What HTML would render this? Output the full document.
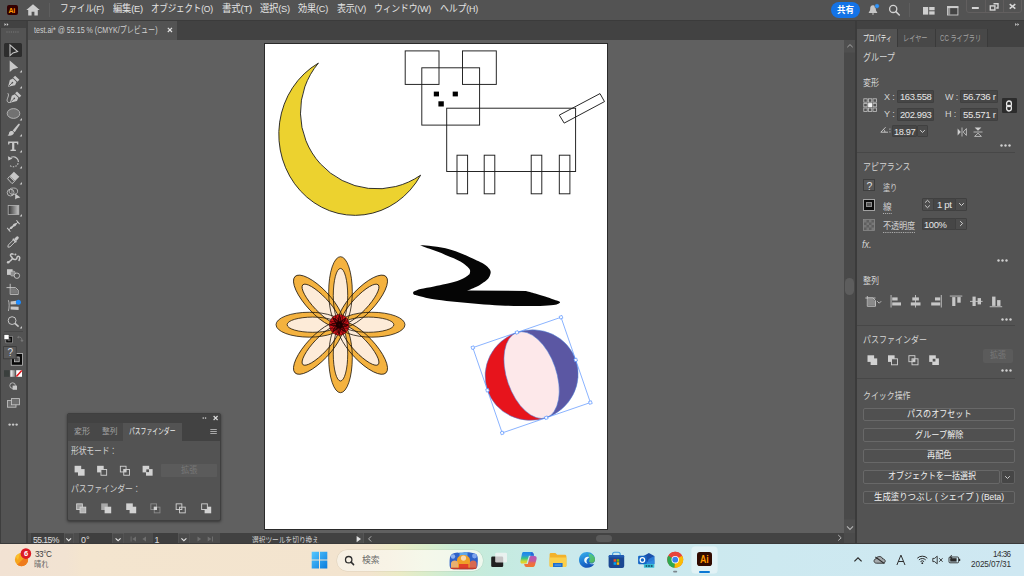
<!DOCTYPE html>
<html lang="ja">
<head>
<meta charset="utf-8">
<title>test.ai* @ 55.15 % (CMYK/プレビュー)</title>
<style>
*{box-sizing:border-box;margin:0;padding:0}
html,body{width:1024px;height:576px;overflow:hidden}
body{position:relative;background:#606060;font-family:"Liberation Sans","Noto Sans CJK JP",sans-serif;font-size:10px;color:#d6d6d6;line-height:1}
.abs{position:absolute}
.t{position:absolute;white-space:nowrap;line-height:1}
svg{position:absolute;overflow:visible}
/* menu bar */
#menubar{left:0;top:0;width:1024px;height:20px;background:#535353}
#menuline{left:0;top:20px;width:1024px;height:1px;background:#3b3b3b}
.mi{top:4.2px;font-size:9.7px;color:#e4e4e4;letter-spacing:-0.2px}
/* tab bar */
#tabbar{left:27px;top:21px;width:830px;height:19px;background:#424242}
#doctab{left:28px;top:21px;width:149px;height:19px;background:#535353}
/* toolbar */
#toolbar{left:0;top:21px;width:26px;height:523px;background:#535353;border-left:1px solid #3e3e3e}
#toolhead{left:0;top:21px;width:26px;height:7px;background:#424242}
#tooldiv{left:26px;top:21px;width:2px;height:523px;background:#3f3f3f}
/* canvas */
#canvas{left:28px;top:40px;width:816px;height:493px;background:#606060}
#artboard{left:264px;top:43px;width:344px;height:487px;background:#fff;border:1px solid #2a2a2a}
#vscroll{left:844.3px;top:40px;width:10.4px;height:493px;background:linear-gradient(#4f4f4f 0,#4f4f4f 12px,#494949 13px,#494949 479px,#4f4f4f 480px)}
#statusbar{left:28px;top:532.6px;width:828px;height:11.4px;background:#4c4c4c}
/* right panel */
#rdiv{left:854.5px;top:21px;width:2.3px;height:523px;background:#3b3b3b}
#rpanel{left:857px;top:21px;width:167px;height:523px;background:#535353}
#rhead{left:857px;top:21px;width:167px;height:8px;background:#424242}
#rtabs{left:857px;top:29px;width:167px;height:18px;background:#424242}
/* taskbar */
#taskbar{left:0;top:544px;width:1024px;height:32px;background:linear-gradient(90deg,#f2e2d3 0%,#f2e3d2 6.5%,#f4e5cf 8%,#f3e4cf 36%,#ecebc6 38.8%,#dbedcb 41.5%,#c9ecd7 44.5%,#c5ebe0 49%,#cae9ec 56%,#cde9f0 75%,#cfe8f2 100%)}
#taskline{left:0;top:543px;width:1024px;height:1px;background:#3a3a3a}

/* right panel widgets */
.inp{position:absolute;background:#464646;border:1px solid #404040;border-radius:1px}
.lbl{font-size:9px;color:#d2d2d2;letter-spacing:-0.2px}
.sec{font-size:9.5px;color:#d6d6d6}
.val{font-size:9.5px;color:#e6e6e6;letter-spacing:-0.38px}
.hr{position:absolute;left:857px;width:158px;height:1px;background:#474747}
.btn{position:absolute;left:863px;width:151.5px;height:13.5px;background:#505050;border:1px solid #686868;border-radius:2px}
.btx{font-size:9px;color:#f0f0f0}
.more{position:absolute;width:10px;height:3px}
</style>
</head>
<body>
<!-- ===== application chrome ===== -->
<div id="canvas" class="abs"></div>
<div id="artboard" class="abs"></div>
<div id="menubar" class="abs"></div>
<div id="menuline" class="abs"></div>
<div id="tabbar" class="abs"></div>
<div id="doctab" class="abs"></div>
<div id="toolbar" class="abs"></div>
<div id="toolhead" class="abs"></div>
<div id="tooldiv" class="abs"></div>
<div id="vscroll" class="abs"></div>
<div id="statusbar" class="abs"></div>
<div class="abs" style="left:363px;top:532.6px;width:481.300px;height:11.400px;background:#434343"></div>
<div id="rdiv" class="abs"></div>
<div id="rpanel" class="abs"></div>
<div id="rhead" class="abs"></div>
<div id="rtabs" class="abs"></div>
<!-- menu bar -->
<div class="abs" style="left:7px;top:5px;width:11px;height:10px;background:#330000;border-radius:2px"></div><div class="t" style="left:8.6px;top:6.6px;font-size:7px;font-weight:bold;color:#ff9a00;letter-spacing:-0.3px">Ai</div>
<svg width="14" height="12" viewBox="0 0 14 12" style="left:26.100px;top:4.400px"><path d="M7,0.300L0.300,6.100H2.200V11.500H5.600V7.800H8.400V11.500H11.800V6.100H13.700Z" fill="#cdcdcd"/></svg>
<div class="abs" style="left:48.500px;top:3px;width:1px;height:14px;background:#5e5e5e"></div>
<div class="t mi jp" style="left:60px;--w:44px">ファイル(F)</div>
<div class="t mi jp" style="left:113px;--w:30px">編集(E)</div>
<div class="t mi jp" style="left:151px;--w:62px">オブジェクト(O)</div>
<div class="t mi jp" style="left:222px;--w:30px">書式(T)</div>
<div class="t mi jp" style="left:260px;--w:30px">選択(S)</div>
<div class="t mi jp" style="left:298px;--w:30px">効果(C)</div>
<div class="t mi jp" style="left:337px;--w:29px">表示(V)</div>
<div class="t mi jp" style="left:374px;--w:57px">ウィンドウ(W)</div>
<div class="t mi jp" style="left:440px;--w:38px">ヘルプ(H)</div>
<div class="abs" style="left:830.8px;top:2.4px;width:29.4px;height:16px;border-radius:8px;background:#1473e6"></div><div class="t jp" style="left:837px;top:6px;font-size:9px;font-weight:bold;color:#fff;--w:17px">共有</div>
<svg width="12" height="12" viewBox="0 0 12 12" style="left:867.1px;top:4.4px"><path d="M6,1.300C4,1.300 3.200,2.900 3.200,4.600C3.200,6.500 2.700,7.500 1.800,8.300V8.900H10.200V8.300C9.300,7.500 8.800,6.500 8.800,4.600C8.800,2.900 8,1.300 6,1.300ZM4.900,9.600A1.100,1.100 0 0,0 7.100,9.600Z" fill="#c6c6c6"/><circle cx="10" cy="2.100" r="2.300" fill="#2e96ff" stroke="#535353" stroke-width=".5"/></svg>
<svg width="14" height="14" viewBox="0 0 14 14" style="left:887px;top:3px"><circle cx="6.2" cy="5.9" r="3.6" fill="none" stroke="#d2d2d2" stroke-width="1.3"/><path d="M8.9,8.6L12.3,12" stroke="#d2d2d2" stroke-width="1.5" stroke-linecap="round"/></svg>
<div class="abs" style="left:909px;top:3px;width:1px;height:14px;background:#5e5e5e"></div>
<svg width="12" height="8" viewBox="0 0 12 8" style="left:923.300px;top:7.200px"><rect x="0" y="0" width="5.2" height="7.6" fill="#cfcfcf"/><rect x="6.2" y="0" width="5.4" height="3.3" fill="#cfcfcf"/><rect x="6.2" y="4.3" width="5.4" height="3.3" fill="#cfcfcf"/></svg>
<svg width="12" height="10" viewBox="0 0 12 10" style="left:947px;top:6px"><rect x="0.5" y="0.6" width="10.400" height="8.400" fill="#444" stroke="#cdcdcd" stroke-width="0.9"/><rect x="0.9" y="1.800" width="2.300" height="6.800" fill="#cdcdcd" opacity=".6"/><rect x="0.100" y="0.200" width="11.200" height="1.900" fill="#cdcdcd"/></svg>
<div class="abs" style="left:966px;top:-1px;width:55.500px;height:13.700px;border:1px solid #625f5f;border-radius:0 0 3px 3px"></div><div class="abs" style="left:984.500px;top:0;width:1px;height:12px;background:#605d5d"></div><div class="abs" style="left:1002.600px;top:0;width:1px;height:12px;background:#605d5d"></div>
<svg width="60" height="13" viewBox="966 0 60 13" style="left:966px;top:0"><path d="M971.900,8H978.800" stroke="#d4d4d4" stroke-width="2"/><path d="M993.500,3.700H998V8H996.200" fill="none" stroke="#d4d4d4" stroke-width="1.400"/><rect x="990.300" y="5.900" width="4.600" height="4.100" fill="none" stroke="#d4d4d4" stroke-width="1.400"/><path d="M1009.700,4.100L1015.300,8.700M1015.300,4.100L1009.700,8.700" stroke="#d8d8d8" stroke-width="1.500"/></svg>

<!-- document tab -->
<div class="t jp" style="left:34px;top:26.300px;font-size:8.600px;color:#d0d0d0;--w:123.500px">test.ai* @ 55.15 % (CMYK/プレビュー)</div>
<svg width="8" height="8" viewBox="0 0 8 8" style="left:166.3px;top:26.3px"><path d="M1.8,1.8L6,6M6,1.8L1.8,6" stroke="#e2e2e2" stroke-width="1.2"/></svg>

<!-- toolbar -->
<div class="abs" style="left:4px;top:43px;width:18px;height:13.5px;background:#2d2d2d;border-radius:1.5px"></div>
<svg width="28" height="410" viewBox="0 20 28 410" style="left:0;top:20px"><path d="M4.500,23L6.200,24.500L4.500,26ZM6.800,23L8.500,24.500L6.800,26Z" fill="#cfcfcf"/><rect x="6.4" y="31.2" width="1.2" height="1.6" fill="#6a6a6a"/><rect x="8.600000000000001" y="31.2" width="1.2" height="1.6" fill="#6a6a6a"/><rect x="10.8" y="31.2" width="1.2" height="1.6" fill="#6a6a6a"/><rect x="13.0" y="31.2" width="1.2" height="1.6" fill="#6a6a6a"/><rect x="15.200000000000001" y="31.2" width="1.2" height="1.6" fill="#6a6a6a"/><rect x="17.4" y="31.2" width="1.2" height="1.6" fill="#6a6a6a"/><path d="M10,44.9V55.6L13,52.9L17.6,51.5Z" fill="none" stroke="#c8c8c8" stroke-width="1.05" stroke-linejoin="miter"/><path d="M9.7,60.6V71.9L13,69.2L18.2,67.8Z" fill="#c8c8c8"/><path d="M22,70.1V72.5H19.6Z" fill="#c8c8c8"/><g transform="translate(13.5 81.5) rotate(45)"><path d="M0,7.600L-3.700,1.500L-2.500,-1.700H2.500L3.700,1.500Z" fill="#c8c8c8"/><rect x="-3" y="-5.300" width="6" height="2.700" fill="#c8c8c8"/><path d="M0,6.400V2" stroke="#535353" stroke-width="0.800"/><circle cx="0" cy="1.500" r="0.800" fill="#535353"/></g><path d="M22,86.1V88.5H19.6Z" fill="#c8c8c8"/><g transform="translate(15.4 97.3) rotate(45)"><path d="M0,7.600L-3.700,1.500L-2.500,-1.700H2.500L3.700,1.500Z" fill="#c8c8c8"/><rect x="-3" y="-5.300" width="6" height="2.700" fill="#c8c8c8"/><path d="M0,6.400V2" stroke="#535353" stroke-width="0.800"/><circle cx="0" cy="1.500" r="0.800" fill="#535353"/></g><path d="M7.8,93.2C10,95.5 6,99 7.4,101.6C8.3,103 10,102.6 11.2,101.8" fill="none" stroke="#c8c8c8" stroke-width="0.9"/><ellipse cx="13.5" cy="113.5" rx="6.3" ry="4.9" fill="#727272" stroke="#b8b8b8" stroke-width="0.9"/><path d="M22,118.1V120.5H19.6Z" fill="#c8c8c8"/><path d="M18.500,123.800C19.500,123.300 20.200,124.100 19.600,125.100L14.700,132.300L12.700,130.600Z" fill="#c8c8c8"/><path d="M12.100,131.100C10,130.400 8.800,132.300 9,133.600C9,134.500 8.400,135 7.500,135.200C9.700,136.300 12.900,135.800 13.900,133.300C14.200,132.400 13.200,131.400 12.100,131.100Z" fill="#c8c8c8"/><path d="M22,134.100V136.500H19.600Z" fill="#c8c8c8"/><path d="M8.100,141.600H18.300V144.600H17.200L16.800,143.100H14.300V149.400L15.900,149.700V150.900H10.500V149.700L12.100,149.400V143.100H9.600L9.200,144.600H8.100Z" fill="#c8c8c8"/><path d="M22,150.1V152.5H19.6Z" fill="#c8c8c8"/><path d="M11.200,157.300A5,5 0 1,1 8.700,163.600" fill="none" stroke="#c8c8c8" stroke-width="1.100" stroke-dasharray="10 1.300 1.400 1.300 1.400 1.300 1.400 1.300 1.400 20"/><path d="M7.900,156.200L8.400,160.600L12.500,158.400Z" fill="#c8c8c8"/><path d="M22,166.1V168.5H19.6Z" fill="#c8c8c8"/><path d="M13.9,171.7L19.3,176.7L15.1,181L9.7,176Z" fill="#c8c8c8"/><path d="M9.3,176.5L14.6,181.4L12,183.6L7.6,178.8Z" fill="#535353" stroke="#c8c8c8" stroke-width="0.9"/><path d="M22,182.1V184.5H19.6Z" fill="#c8c8c8"/><circle cx="10.6" cy="192.6" r="3.4" fill="none" stroke="#c8c8c8" stroke-width="0.8"/><ellipse cx="13.4" cy="191.2" rx="4.2" ry="3.2" fill="none" stroke="#c8c8c8" stroke-width="0.8"/><path d="M12,189V196" stroke="#c8c8c8" stroke-width="0.6"/><path d="M15.2,193.6V199.6L16.9,198.2L20.4,197.4Z" fill="#c8c8c8"/><defs><linearGradient id="tg" x1="0" x2="1" y1="0" y2="0"><stop offset="0" stop-color="#333"/><stop offset="1" stop-color="#c4c4c4"/></linearGradient></defs><rect x="8.2" y="205.4" width="10.6" height="9" fill="url(#tg)" stroke="#b4b4b4" stroke-width="0.8"/><path d="M22,214.1V216.5H19.6Z" fill="#c8c8c8"/><g transform="translate(13.400 226) rotate(-39.500)"><path d="M-6,-2.500V2.500M6,-2.500V2.500" stroke="#c8c8c8" stroke-width="1"/><path d="M-6,0H6" stroke="#c8c8c8" stroke-width="0.900"/><path d="M-4.600,0C-3.600,-1.500 -2.400,-1.300 -1.400,-0.800C-0.400,-0.300 0.600,-1.500 1.800,-1.300C3,-1.100 3.800,-0.600 4.600,0C3.800,0.600 3,1.100 1.800,1.300C0.600,1.500 -0.400,0.300 -1.400,0.800C-2.400,1.300 -3.600,1.500 -4.600,0Z" fill="#c8c8c8"/></g><g transform="translate(13.3 241.8) rotate(45)"><path d="M-1.3,-1.400H1.300V6L0,7.600L-1.300,6Z" fill="none" stroke="#c8c8c8" stroke-width="0.9"/><rect x="-2.500" y="-2.600" width="5" height="1.600" fill="#c8c8c8"/><path d="M-1.500,-2.600V-5.400A1.500,1.800 0 0,1 1.500,-5.400V-2.600Z" fill="#c8c8c8"/></g><path d="M8,262.4C10,261.600 11.600,260 12.200,258.400C12.600,256.800 10.600,256.600 10.400,255.200C10.400,254 12,253.400 13,254.200M12.400,258.200C14.600,260.400 17,259.600 17,257.600C17,256 19,255.600 19.600,257.200C20,258.400 19.400,259.400 19,260.400" fill="none" stroke="#c8c8c8" stroke-width="1.500" stroke-linecap="round"/><circle cx="8.2" cy="262.2" r="1.3" fill="#c8c8c8"/><circle cx="15.4" cy="254.6" r="1" fill="#c8c8c8"/><rect x="7" y="269.2" width="5.6" height="5.7" fill="#c8c8c8"/><rect x="10.6" y="271.2" width="4.6" height="4.8" rx="1.4" fill="#8c8c8c" stroke="#c8c8c8" stroke-width="0.6"/><circle cx="16.9" cy="275.7" r="2.7" fill="#535353" stroke="#c8c8c8" stroke-width="0.9"/><path d="M10.2,283.8V294.4M6.500,287.600H15.400L18.200,290.200V294.400H10.200" fill="none" stroke="#c8c8c8" stroke-width="0.9"/><path d="M10.8,288.2H15.100L17.600,290.500V293.800H10.800Z" fill="#7a7a7a"/><path d="M8.4,300.2C9.400,303.400 9.400,307 8.400,311" fill="none" stroke="#c8c8c8" stroke-width="0.8"/><path d="M10.6,301.6L16.4,300.8V304.2L10.6,304.6Z M10.6,306.4L18.6,306.8V310L10.6,309.4Z" fill="#c8c8c8"/><circle cx="18.4" cy="302.2" r="2.5" fill="#1e8cff"/><circle cx="12.1" cy="320.6" r="3.9" fill="none" stroke="#c8c8c8" stroke-width="1"/><path d="M15,323.4L18.6,326.6" stroke="#c8c8c8" stroke-width="1.6"/><path d="M22,326.1V328.5H19.6Z" fill="#c8c8c8"/><path d="M4.3,331.5H23" stroke="#474747" stroke-width="1"/><rect x="6.8" y="337.4" width="4.6" height="4.6" fill="none" stroke="#0a0a0a" stroke-width="1.6"/><rect x="5.9" y="336.5" width="6.4" height="6.4" fill="none" stroke="#b0b0b0" stroke-width="0.5"/><rect x="4" y="334.6" width="5" height="5" fill="#fff" stroke="#333" stroke-width="0.6"/><path d="M18.4,337.2C20.400,336.600 22,337.800 22,340.400" fill="none" stroke="#787878" stroke-width="1"/><path d="M18.6,335.6L17,337.4L19,338.6ZM20.400,340L22,342.200L23.600,340Z" fill="#787878"/><rect x="11.2" y="353.6" width="11.4" height="11.6" fill="#0a0a0a" stroke="#d4d4d4" stroke-width="0.7"/><rect x="14.6" y="357" width="4.6" height="4.8" fill="#535353" stroke="#d4d4d4" stroke-width="0.7"/><rect x="3.6" y="346.6" width="12.6" height="12.2" fill="#5a5a5a" stroke="#3a3a3a" stroke-width="0.8"/><rect x="4" y="370.2" width="5.6" height="6.6" fill="#3a3f3d"/><defs><linearGradient id="tg2" x1="0" x2="1"><stop offset="0" stop-color="#fff"/><stop offset="1" stop-color="#777"/></linearGradient></defs><rect x="10.4" y="370.2" width="4.8" height="6.6" fill="url(#tg2)"/><rect x="16.2" y="370.2" width="5.8" height="6.6" fill="#fff"/><path d="M16.4,376.4L21.8,370.6" stroke="#e8131a" stroke-width="1.5"/><circle cx="12.6" cy="385.6" r="2.8" fill="none" stroke="#c8c8c8" stroke-width="0.8"/><rect x="12.6" y="385.6" width="4.4" height="4.2" fill="#c8c8c8"/><rect x="7.4" y="400.6" width="8.6" height="6.6" fill="#6e6e6e" stroke="#c8c8c8" stroke-width="0.8"/><rect x="11.4" y="398.6" width="8.2" height="6.2" fill="#6e6e6e" stroke="#c8c8c8" stroke-width="0.8"/><circle cx="9.6" cy="424.6" r="1.2" fill="#c8c8c8"/><circle cx="13.1" cy="424.6" r="1.2" fill="#c8c8c8"/><circle cx="16.6" cy="424.6" r="1.2" fill="#c8c8c8"/></svg>
<div class="t" style="left:7.4px;top:348px;font-size:10px;color:#d6dce6">?</div>

<svg id="art" width="1024" height="576" viewBox="0 0 1024 576" style="left:0;top:0">
<!-- moon -->
<path d="M318.4,63.1A76.1,81.1 0 1,0 420.6,175.2A76.52,76.52 0 0,1 318.4,63.1Z" fill="#ecd22f" stroke="#1c1c1c" stroke-width="0.9"/>
<!-- box animal -->
<g fill="none" stroke="#1c1c1c" stroke-width="0.95">
<rect x="405.2" y="50.9" width="33.8" height="33.5"/>
<rect x="462.5" y="50.9" width="33.8" height="33.5"/>
<rect x="421.8" y="67.8" width="57.8" height="57.3"/>
<rect x="446.7" y="108.2" width="128.9" height="63.3"/>
<rect x="457" y="155.2" width="10.6" height="38.6"/>
<rect x="484.2" y="155.2" width="10.6" height="38.6"/>
<rect x="531.2" y="155.2" width="10.6" height="38.6"/>
<rect x="559.3" y="155.2" width="10.6" height="38.6"/>
<path d="M559.3,115.1L600,93.6L604.5,101.6L564.2,123.1Z"/>
</g>
<g fill="#000"><rect x="433.8" y="91.6" width="5.2" height="4.8"/><rect x="452.7" y="91.6" width="5.2" height="4.8"/><rect x="438.4" y="101.3" width="5.4" height="5.2"/></g>
<!-- flower -->
<g transform="translate(340.5 324.7) scale(0.948 1)"><defs><path id="po" d="M-12.45,-33a12.45,35 0 1,0 24.9,0a12.45,35 0 1,0 -24.9,0z"/><path id="pin" d="M-7.6,-29.4a7.6,26.9 0 1,0 15.2,0a7.6,26.9 0 1,0 -15.2,0z"/><path id="prg" d="M-12.45,-33a12.45,35 0 1,0 24.9,0a12.45,35 0 1,0 -24.9,0zM-7.6,-29.4a7.6,26.9 0 1,0 15.2,0a7.6,26.9 0 1,0 -15.2,0z"/></defs><g transform="rotate(0)"><use href="#po" fill="#f4b23f"/><use href="#pin" fill="#fdebd8"/></g><g transform="rotate(45)"><use href="#po" fill="#f4b23f"/><use href="#pin" fill="#fdebd8"/></g><g transform="rotate(90)"><use href="#po" fill="#f4b23f"/><use href="#pin" fill="#fdebd8"/></g><g transform="rotate(135)"><use href="#po" fill="#f4b23f"/><use href="#pin" fill="#fdebd8"/></g><g transform="rotate(180)"><use href="#po" fill="#f4b23f"/><use href="#pin" fill="#fdebd8"/></g><g transform="rotate(225)"><use href="#po" fill="#f4b23f"/><use href="#pin" fill="#fdebd8"/></g><g transform="rotate(270)"><use href="#po" fill="#f4b23f"/><use href="#pin" fill="#fdebd8"/></g><g transform="rotate(315)"><use href="#po" fill="#f4b23f"/><use href="#pin" fill="#fdebd8"/></g><g fill="none" stroke="#1a1208" stroke-width="0.8"><use href="#prg" transform="rotate(0)"/><use href="#prg" transform="rotate(45)"/><use href="#prg" transform="rotate(90)"/><use href="#prg" transform="rotate(135)"/><use href="#prg" transform="rotate(180)"/><use href="#prg" transform="rotate(225)"/><use href="#prg" transform="rotate(270)"/><use href="#prg" transform="rotate(315)"/></g><g transform="translate(-1.3 0.2)"><circle cx="0" cy="0" r="10.4" fill="#d4141a" stroke="#300" stroke-width="0.6"/><g fill="none" stroke="#1a0000" stroke-width="0.800" opacity="0.6"><path d="M0,-10q-4,6 0,20" transform="rotate(22)"/><path d="M0,-10q-4,6 0,20" transform="rotate(67)"/><path d="M0,-10q-4,6 0,20" transform="rotate(112)"/><path d="M0,-10q-4,6 0,20" transform="rotate(157)"/><path d="M0,-10q-4,6 0,20" transform="rotate(202)"/><path d="M0,-10q-4,6 0,20" transform="rotate(247)"/><path d="M0,-10q-4,6 0,20" transform="rotate(292)"/><path d="M0,-10q-4,6 0,20" transform="rotate(337)"/></g><g fill="none" stroke="#1a0000" stroke-width="1.300" opacity="0.8"><path d="M0,-9.5q3.4,5 0,19" transform="rotate(0)"/><path d="M0,-9.5q3.4,5 0,19" transform="rotate(45)"/><path d="M0,-9.5q3.4,5 0,19" transform="rotate(90)"/><path d="M0,-9.5q3.4,5 0,19" transform="rotate(135)"/><path d="M0,-9.5q3.4,5 0,19" transform="rotate(180)"/><path d="M0,-9.5q3.4,5 0,19" transform="rotate(225)"/><path d="M0,-9.5q3.4,5 0,19" transform="rotate(270)"/><path d="M0,-9.5q3.4,5 0,19" transform="rotate(315)"/></g><circle cx="0" cy="0" r="3.600" fill="#1a0000" opacity=".85"/></g></g>
<!-- swoosh -->
<path d="M419.8,244.9C421.3,245.1 424.6,245.2 428.9,245.8C433.2,246.3 440.5,247.2 445.5,248.3C450.5,249.4 454.6,250.9 458.8,252.4C462.9,253.9 467.1,255.9 470.4,257.4C473.7,258.9 476.2,260.0 478.7,261.2C481.2,262.5 483.5,263.6 485.3,264.9C487.1,266.2 488.6,267.8 489.5,269.0C490.4,270.3 490.7,271.1 490.7,272.3C490.7,273.6 490.1,275.2 489.5,276.5C488.9,277.7 488.3,278.6 487.0,279.8C485.8,281.0 483.7,282.4 482.0,283.5C480.4,284.6 479.5,285.3 477.0,286.4C474.6,287.6 468.7,289.9 467.1,290.6L526.0,290.9C527.5,291.3 532.0,292.5 535.2,293.4C538.3,294.3 541.5,295.2 545.1,296.4C548.7,297.6 554.2,299.6 556.7,300.6C559.2,301.5 559.8,301.7 560.1,302.2C560.3,302.7 559.5,303.2 558.4,303.7C557.3,304.2 556.5,304.7 553.4,305.0C550.4,305.4 545.7,305.7 540.1,305.9C534.6,306.0 526.9,306.1 520.2,306.0C513.6,306.0 507.2,305.7 500.3,305.4C493.4,305.0 485.9,304.4 478.7,303.9C471.5,303.3 464.0,302.7 457.1,302.1C450.2,301.4 442.5,300.4 437.2,299.7C431.9,299.0 428.9,298.4 425.6,297.7C422.3,297.0 419.2,296.1 417.3,295.6C415.4,295.1 415.0,295.2 414.3,294.7C413.6,294.3 413.0,293.4 413.1,292.8C413.2,292.1 413.5,291.7 414.8,291.1C416.0,290.5 417.4,289.7 420.6,288.9C423.8,288.2 429.7,287.3 433.9,286.4C438.0,285.6 442.2,284.7 445.5,284.0C448.8,283.2 451.3,282.7 453.8,282.0C456.3,281.3 458.5,280.6 460.4,279.8C462.4,279.0 464.0,278.1 465.4,277.3C466.8,276.5 468.0,275.5 468.7,274.8C469.5,274.2 469.5,274.2 469.7,273.5C470.0,272.8 470.2,271.5 470.1,270.7C470.0,269.8 469.9,269.5 469.1,268.5C468.3,267.5 466.9,266.0 465.4,264.9C464.0,263.7 462.4,262.6 460.4,261.5C458.5,260.4 456.3,259.3 453.8,258.2C451.3,257.1 448.3,256.0 445.5,254.9C442.7,253.8 440.0,252.6 437.2,251.6C434.4,250.5 431.8,249.7 428.9,248.6C426.0,247.5 421.3,245.6 419.8,244.9Z" fill="#050505"/>
<!-- ball -->
<g transform="rotate(-19 531.6 375.1)">
<path d="M531.6,330.0A46.65,45.1 0 0,0 531.6,420.20000000000005Z" fill="#e7141c"/>
<path d="M531.6,330.0A46.65,45.1 0 0,1 531.6,420.20000000000005Z" fill="#5b57a3"/>
<ellipse cx="531.6" cy="375.1" rx="24.8" ry="45.1" fill="#fde8ea"/>
<ellipse cx="531.6" cy="375.1" rx="46.65" ry="45.1" fill="none" stroke="#4b7dd8" stroke-width="0.5"/>
<ellipse cx="531.6" cy="375.1" rx="24.8" ry="45.1" fill="none" stroke="#4b7dd8" stroke-width="0.5"/>
<rect x="484.95" y="330.00" width="93.3" height="90.2" fill="none" stroke="#4f8cff" stroke-width="0.6"/>
<g fill="#fff" stroke="#4f8cff" stroke-width="0.6">
<rect x="483.50" y="328.55" width="2.9" height="2.9"/><rect x="530.15" y="328.55" width="2.9" height="2.9"/><rect x="576.80" y="328.55" width="2.9" height="2.9"/><rect x="483.50" y="373.65" width="2.9" height="2.9"/><rect x="576.80" y="373.65" width="2.9" height="2.9"/><rect x="483.50" y="418.75" width="2.9" height="2.9"/><rect x="530.15" y="418.75" width="2.9" height="2.9"/><rect x="576.80" y="418.75" width="2.9" height="2.9"/>
</g>
</g>
</svg>
<!-- properties panel -->
<svg width="6" height="4" viewBox="0 0 6 4" style="left:1015px;top:22.800px"><path d="M0.200,0.100L1.900,1.600L0.200,3.100ZM2.400,0.100L4.100,1.600L2.400,3.100Z" fill="#cfcfcf"/></svg>
<div class="abs" style="left:857px;top:29px;width:40px;height:18px;background:#535353"></div><div class="abs" style="left:898px;top:29px;width:36.5px;height:17.5px;background:#484848"></div><div class="abs" style="left:935.5px;top:29px;width:51px;height:17.5px;background:#484848"></div><div class="abs" style="left:897px;top:29px;width:1px;height:18px;background:#3a3a3a"></div><div class="abs" style="left:934.5px;top:29px;width:1px;height:18px;background:#3a3a3a"></div><div class="abs" style="left:986.5px;top:29px;width:1px;height:18px;background:#3a3a3a"></div>
<div class="t jp" style="left:862.5px;top:33.5px;font-size:8.5px;color:#ececec;--w:29px">プロパティ</div><div class="t jp" style="left:903px;top:33.5px;font-size:8.5px;color:#a2a2a2;--w:24.5px">レイヤー</div><div class="t jp" style="left:940px;top:33.5px;font-size:8.5px;color:#a2a2a2;--w:41px">CC ライブラリ</div>
<div class="t sec jp" style="left:863px;top:53px;font-size:10px;--w:32px">グループ</div>
<div class="t sec jp" style="left:863px;top:77.5px;--w:16px">変形</div>
<svg width="14" height="14" viewBox="0 0 14 14" style="left:862.5px;top:98px"><rect x="0.8" y="0.8" width="3.4" height="3.4" fill="none" stroke="#c4c4c4" stroke-width="0.8"/><rect x="0.8" y="5.3999999999999995" width="3.4" height="3.4" fill="none" stroke="#c4c4c4" stroke-width="0.8"/><rect x="0.8" y="10.0" width="3.4" height="3.4" fill="none" stroke="#c4c4c4" stroke-width="0.8"/><rect x="5.3999999999999995" y="0.8" width="3.4" height="3.4" fill="none" stroke="#c4c4c4" stroke-width="0.8"/><rect x="5.1" y="5.1" width="4" height="4" fill="#f2f2f2"/><rect x="5.3999999999999995" y="10.0" width="3.4" height="3.4" fill="none" stroke="#c4c4c4" stroke-width="0.8"/><rect x="10.0" y="0.8" width="3.4" height="3.4" fill="none" stroke="#c4c4c4" stroke-width="0.8"/><rect x="10.0" y="5.3999999999999995" width="3.4" height="3.4" fill="none" stroke="#c4c4c4" stroke-width="0.8"/><rect x="10.0" y="10.0" width="3.4" height="3.4" fill="none" stroke="#c4c4c4" stroke-width="0.8"/></svg>
<div class="t lbl" style="left:883.5px;top:92px;font-size:9.5px;--w:10.5px">X :</div><div class="t lbl" style="left:883.5px;top:109.200px;font-size:9.5px;--w:10.5px">Y :</div><div class="t lbl" style="left:944.5px;top:92px;font-size:9.5px;--w:13px">W :</div><div class="t lbl" style="left:944.5px;top:109.200px;font-size:9.5px;--w:11px">H :</div>
<div class="inp" style="left:897.200px;top:90.300px;width:36.700px;height:12.800px"></div><div class="inp" style="left:897.200px;top:107.800px;width:36.700px;height:12.800px"></div><div class="inp" style="left:960.400px;top:90.300px;width:37.400px;height:12.800px"></div><div class="inp" style="left:960.400px;top:107.800px;width:37.400px;height:12.800px"></div>
<div class="t val" style="left:900.400px;top:92.100px;--w:31.500px">163.558</div><div class="t val" style="left:900.400px;top:109.600px;--w:31.500px">202.993</div><div class="t val" style="left:963.400px;top:92.100px;--w:32.500px">56.736 r</div><div class="t val" style="left:963.400px;top:109.600px;--w:32.500px">55.571 r</div>
<div class="abs" style="left:1001.5px;top:98px;width:15.5px;height:15px;background:#2c2c2c;border-radius:1px"></div><svg width="8" height="12" viewBox="0 0 8 12" style="left:1005.3px;top:99.5px"><rect x="1.6" y="1" width="4.8" height="5.6" rx="2.4" fill="none" stroke="#e8e8e8" stroke-width="1.3"/><rect x="1.6" y="5.4" width="4.8" height="5.6" rx="2.4" fill="none" stroke="#e8e8e8" stroke-width="1.3"/></svg>
<svg width="12" height="8" viewBox="0 0 12 8" style="left:879.5px;top:125.5px"><path d="M0.8,6.2H8M0.8,6.2L5.6,1.2M5,6.2A4,4 0 0,0 3.6,3.4" fill="none" stroke="#cfcfcf" stroke-width="0.9"/><rect x="9.4" y="2.6" width="1" height="1" fill="#cfcfcf"/><rect x="9.4" y="5.4" width="1" height="1" fill="#cfcfcf"/></svg><div class="inp" style="left:891.800px;top:124.800px;width:25.200px;height:12.500px"></div><div class="inp" style="left:917px;top:124.800px;width:11.200px;height:12.500px;background:#4b4b4b"></div><div class="t val" style="left:893.900px;top:126.700px;font-size:9.700px;--w:21.300px">18.97</div><svg width="7" height="5" viewBox="0 0 7 5" style="left:919.200px;top:128.700px"><path d="M1.200,1.200L3.500,3.400L5.800,1.200" fill="none" stroke="#d4d4d4" stroke-width="1"/></svg>
<svg width="10" height="10" viewBox="0 0 10 10" style="left:957px;top:127px"><path d="M0.6,1.6L3.8,5L0.6,8.4Z" fill="#cfcfcf"/><path d="M9.4,1.6L6.2,5L9.4,8.4Z" fill="none" stroke="#cfcfcf" stroke-width="0.8"/><path d="M5,0.5V9.5" stroke="#cfcfcf" stroke-width="0.8"/></svg><svg width="10" height="10" viewBox="0 0 10 10" style="left:973px;top:127px"><path d="M1.6,0.6L5,3.8L8.4,0.6Z" fill="#cfcfcf"/><path d="M1.6,9.4L5,6.2L8.4,9.4Z" fill="none" stroke="#cfcfcf" stroke-width="0.8"/><path d="M0.5,5H9.5" stroke="#cfcfcf" stroke-width="0.8"/></svg>
<svg width="11" height="3" viewBox="0 0 11 3" style="left:1000.0px;top:144.3px"><circle cx="1.5" cy="1.5" r="1.2" fill="#d0d0d0"/><circle cx="5.5" cy="1.5" r="1.2" fill="#d0d0d0"/><circle cx="9.5" cy="1.5" r="1.2" fill="#d0d0d0"/></svg><div class="hr" style="top:152px"></div>
<div class="t sec jp" style="left:863px;top:161.5px;--w:47.5px">アピアランス</div>
<div class="abs" style="left:863.200px;top:179.300px;width:12px;height:12.200px;background:#575757;border:1px solid #3e3e3e"></div><div class="t" style="left:866.400px;top:180.700px;font-size:10.500px;color:#dcdcdc">?</div><div class="t lbl jp" style="left:883px;top:183.5px;--w:14px">塗り</div>
<div class="abs" style="left:863px;top:199px;width:12px;height:11.5px;background:#0c0c0c;border:1px solid #a2a2a2"></div><div class="abs" style="left:866.400px;top:202.300px;width:5.400px;height:5px;background:#535353;border:1px solid #8e8e8e"></div><div class="t lbl jp" style="left:883px;top:203px;border-bottom:1px dotted #bbb;padding-bottom:0.5px;--w:8.5px">線</div>
<div class="inp" style="left:922px;top:198px;width:11.5px;height:12.5px;background:#4d4d4d"></div><div class="inp" style="left:933px;top:198px;width:22.5px;height:12.5px"></div><div class="inp" style="left:955px;top:198px;width:12px;height:12.5px;background:#4d4d4d"></div><svg width="7" height="10" viewBox="0 0 7 10" style="left:924.2px;top:199.2px"><path d="M1.100,3.600L3.500,1.300L5.900,3.600M1.100,6.400L3.500,8.700L5.900,6.400" fill="none" stroke="#d4d4d4" stroke-width="0.950"/></svg><div class="t val" style="left:936.5px;top:200px;--w:14.5px">1 pt</div><svg width="7" height="5" viewBox="0 0 7 5" style="left:957.5px;top:201.7px"><path d="M1.200,1.200L3.500,3.500L5.800,1.200" fill="none" stroke="#d4d4d4" stroke-width="1"/></svg>
<svg width="12" height="12" viewBox="0 0 12 12" style="left:863px;top:218.5px"><rect x="0.5" y="0.5" width="11" height="11" fill="#5f5f5f" stroke="#8a8a8a" stroke-width="0.8"/><rect x="1.0" y="1.0" width="2.5" height="2.5" fill="#777"/><rect x="1.0" y="6.0" width="2.5" height="2.5" fill="#777"/><rect x="3.5" y="3.5" width="2.5" height="2.5" fill="#777"/><rect x="3.5" y="8.5" width="2.5" height="2.5" fill="#777"/><rect x="6.0" y="1.0" width="2.5" height="2.5" fill="#777"/><rect x="6.0" y="6.0" width="2.5" height="2.5" fill="#777"/><rect x="8.5" y="3.5" width="2.5" height="2.5" fill="#777"/><rect x="8.5" y="8.5" width="2.5" height="2.5" fill="#777"/></svg><div class="t lbl jp" style="left:883px;top:222px;border-bottom:1px dotted #bbb;padding-bottom:0.5px;--w:32px">不透明度</div>
<div class="inp" style="left:922px;top:217.5px;width:33.5px;height:12.5px"></div><div class="inp" style="left:955px;top:217.5px;width:12px;height:12.5px;background:#4d4d4d"></div><div class="t val" style="left:924px;top:219.5px;--w:22.5px">100%</div><svg width="5" height="7" viewBox="0 0 5 7" style="left:959px;top:220.3px"><path d="M1.200,1.100L3.600,3.500L1.200,5.900" fill="none" stroke="#d4d4d4" stroke-width="1"/></svg>
<div class="t" style="left:861.5px;top:240px;font-size:10px;font-style:italic;color:#d0d0d0;--w:9.5px">fx.</div>
<svg width="11" height="3" viewBox="0 0 11 3" style="left:996.5px;top:259.0px"><circle cx="1.5" cy="1.5" r="1.2" fill="#d0d0d0"/><circle cx="5.5" cy="1.5" r="1.2" fill="#d0d0d0"/><circle cx="9.5" cy="1.5" r="1.2" fill="#d0d0d0"/></svg>
<!-- align -->
<div class="t sec jp" style="left:863px;top:276px;--w:16px">整列</div>
<svg width="160" height="16" viewBox="860 293 160 16" style="left:860px;top:293px"><path d="M867.3,296V306.3M865.3,298H875.5M867.3,298H873L875.5,300.5V306.3H867.3" fill="none" stroke="#c6c6c6" stroke-width="0.9"/><path d="M867.8,298.5H872.8L875,300.8V305.8H867.8Z" fill="#8a8a8a"/><path d="M877.2,301.2L879.2,303.2L881.2,301.2" fill="none" stroke="#c6c6c6" stroke-width="0.9"/><rect x="890.6" y="295" width="0.9" height="12.5" fill="#c6c6c6"/><rect x="892.2" y="297.4" width="5.4" height="3.1" fill="#c6c6c6"/><rect x="892.2" y="302.4" width="8.8" height="3.1" fill="#c6c6c6"/><rect x="915.1" y="295" width="0.9" height="12.5" fill="#c6c6c6"/><rect x="912.3" y="297.4" width="6.6" height="3.1" fill="#c6c6c6"/><rect x="910.8" y="302.4" width="9.7" height="3.1" fill="#c6c6c6"/><rect x="940.8" y="295" width="0.9" height="12.5" fill="#c6c6c6"/><rect x="935" y="297.4" width="5.2" height="3.1" fill="#c6c6c6"/><rect x="931.2" y="302.4" width="9" height="3.1" fill="#c6c6c6"/><rect x="949.8" y="295.6" width="12.5" height="0.9" fill="#c6c6c6"/><rect x="952.2" y="297.1" width="3.2" height="8.9" fill="#c6c6c6"/><rect x="957.3" y="297.1" width="3.4" height="5.6" fill="#c6c6c6"/><rect x="970" y="300.9" width="12.6" height="0.9" fill="#c6c6c6"/><rect x="972.5" y="296.6" width="3.2" height="9.4" fill="#c6c6c6"/><rect x="977.6" y="298.1" width="3.4" height="6.3" fill="#c6c6c6"/><rect x="989.7" y="306.3" width="12.5" height="0.9" fill="#c6c6c6"/><rect x="992.1" y="296.6" width="3.4" height="9.3" fill="#c6c6c6"/><rect x="997.1" y="300.1" width="3.4" height="5.8" fill="#c6c6c6"/></svg>
<svg width="11" height="3" viewBox="0 0 11 3" style="left:1000.5px;top:317.7px"><circle cx="1.5" cy="1.5" r="1.2" fill="#d0d0d0"/><circle cx="5.5" cy="1.5" r="1.2" fill="#d0d0d0"/><circle cx="9.5" cy="1.5" r="1.2" fill="#d0d0d0"/></svg><div class="hr" style="top:325px"></div>
<!-- pathfinder -->
<div class="t sec jp" style="left:863px;top:335px;--w:64px">パスファインダー</div>
<svg width="80" height="12" viewBox="866 354 80 12" style="left:866px;top:354px"><rect x="867.5" y="355.3" width="6.6" height="6.6" fill="#d2d2d2"/><rect x="870.6" y="358.4" width="6.6" height="6.6" fill="#d2d2d2"/><rect x="888" y="355.3" width="6.6" height="6.6" fill="#d2d2d2"/><rect x="891.5" y="358.8" width="6" height="6" fill="#535353" stroke="#d2d2d2" stroke-width="0.9"/><rect x="908.9" y="355.7" width="6" height="6" fill="none" stroke="#d2d2d2" stroke-width="0.9"/><rect x="912" y="358.8" width="6" height="6" fill="none" stroke="#d2d2d2" stroke-width="0.9"/><rect x="912.4" y="359.2" width="2.6" height="2.6" fill="#d2d2d2"/><rect x="929.2" y="355.3" width="6.6" height="6.6" fill="#d2d2d2"/><rect x="932.3" y="358.4" width="6.6" height="6.6" fill="#d2d2d2"/><rect x="932.7" y="358.8" width="2.7" height="2.7" fill="#535353"/></svg>
<div class="abs" style="left:982.5px;top:348.5px;width:30.5px;height:14px;background:#5b5b5b;border-radius:2px"></div><div class="t jp" style="left:990px;top:351px;font-size:9px;color:#767676;--w:16px">拡張</div>
<svg width="11" height="3" viewBox="0 0 11 3" style="left:1000.5px;top:368.7px"><circle cx="1.5" cy="1.5" r="1.2" fill="#d0d0d0"/><circle cx="5.5" cy="1.5" r="1.2" fill="#d0d0d0"/><circle cx="9.5" cy="1.5" r="1.2" fill="#d0d0d0"/></svg><div class="hr" style="top:377.5px"></div>
<!-- quick actions -->
<div class="t sec jp" style="left:863px;top:391px;--w:47.5px">クイック操作</div>
<div class="btn" style="top:407.5px;width:151.5px"></div><div class="t btx jp" style="left:906.5px;top:409.9px;--w:64.5px">パスのオフセット</div>
<div class="btn" style="top:428.2px;width:151.5px"></div><div class="t btx jp" style="left:914.5px;top:430.59999999999997px;--w:48.5px">グループ解除</div>
<div class="btn" style="top:449px;width:151.5px"></div><div class="t btx jp" style="left:926.5px;top:451.4px;--w:24.5px">再配色</div>
<div class="btn" style="top:470px;width:137px"></div><div class="t btx jp" style="left:887.5px;top:472.4px;--w:88px">オブジェクトを一括選択</div>
<div class="btn" style="top:490.5px;width:151.5px"></div><div class="t btx jp" style="left:873.5px;top:492.9px;--w:130px">生成塗りつぶし ( シェイプ ) (Beta)</div>
<div class="btn" style="left:1000.5px;top:470px;width:14px;background:#464646;border-color:#626262"></div><svg width="7" height="5" viewBox="0 0 7 5" style="left:1004.200px;top:474.700px"><path d="M1.200,1.200L3.500,3.500L5.800,1.200" fill="none" stroke="#cdcdcd" stroke-width="1"/></svg>

<!-- floating pathfinder panel -->
<div class="abs" style="left:66.5px;top:413px;width:154.5px;height:107.5px;background:#535353;border-radius:2px;box-shadow:0 1px 3px rgba(0,0,0,.45);border:1px solid #3f3f3f"></div><div class="abs" style="left:67.5px;top:414px;width:152.5px;height:27px;background:#424242;border-radius:1px 1px 0 0"></div><div class="abs" style="left:67.5px;top:423px;width:55.5px;height:17.5px;background:#484848"></div><div class="abs" style="left:123px;top:423px;width:59px;height:18px;background:#535353"></div>
<svg width="20" height="8" viewBox="200 414 20 8" style="left:200px;top:414px"><rect x="202.600" y="417.300" width="1.300" height="1.500" fill="#c4c4c4"/><rect x="204.900" y="417.300" width="1.300" height="1.500" fill="#c4c4c4"/><path d="M213.600,416L217.600,420M217.600,416L213.600,420" stroke="#dadada" stroke-width="1.150"/></svg>
<div class="t jp" style="left:73.5px;top:427px;font-size:8.5px;color:#a2a2a2;--w:16px">変形</div><div class="t jp" style="left:101.5px;top:427px;font-size:8.5px;color:#a2a2a2;--w:15.5px">整列</div><div class="t jp" style="left:129.3px;top:427px;font-size:8.5px;color:#ececec;--w:46.5px">パスファインダー</div>
<svg width="8" height="6" viewBox="0 0 8 6" style="left:210px;top:429px"><path d="M0.3,0.5H6.800M0.3,2.500H6.800M0.3,4.500H6.800" stroke="#c4c4c4" stroke-width="0.800"/></svg>
<div class="t lbl jp" style="left:71px;top:446.5px;--w:46px">形状モード：</div>
<svg width="160" height="60" viewBox="64 460 160 60" style="left:64px;top:460px"><rect x="74.6" y="465.8" width="6.6" height="6.6" fill="#d2d2d2"/><rect x="78.0" y="469.1" width="6.6" height="6.6" fill="#d2d2d2"/><rect x="97.1" y="465.8" width="6.6" height="6.6" fill="#d2d2d2"/><rect x="100.95" y="469.55" width="5.699999999999999" height="5.699999999999999" fill="#535353" stroke="#d2d2d2" stroke-width="0.9"/><rect x="120.35000000000001" y="466.25" width="5.699999999999999" height="5.699999999999999" fill="none" stroke="#d2d2d2" stroke-width="0.9"/><rect x="123.75000000000001" y="469.55" width="5.699999999999999" height="5.699999999999999" fill="none" stroke="#d2d2d2" stroke-width="0.9"/><rect x="123.7" y="469.5" width="2.4" height="2.4" fill="#d2d2d2"/><rect x="142.6" y="465.8" width="6.6" height="6.6" fill="#d2d2d2"/><rect x="146.0" y="469.1" width="6.6" height="6.6" fill="#d2d2d2"/><rect x="146.3" y="469.4" width="2.7" height="2.7" fill="#535353"/><rect x="76.65" y="503.84999999999997" width="5.699999999999999" height="5.699999999999999" fill="#9a9a9a" stroke="#d2d2d2" stroke-width="0.9"/><rect x="80.05000000000001" y="507.15" width="5.699999999999999" height="5.699999999999999" fill="#b4b4b4" stroke="#d2d2d2" stroke-width="0.9"/><rect x="101.2" y="503.4" width="6.6" height="6.6" fill="#a8a8a8"/><rect x="104.60000000000001" y="506.7" width="6.6" height="6.6" fill="#d2d2d2"/><rect x="126.2" y="503.4" width="6.6" height="6.6" fill="#d2d2d2"/><rect x="129.6" y="506.7" width="6.6" height="6.6" fill="#d2d2d2"/><rect x="150.85" y="503.84999999999997" width="5.699999999999999" height="5.699999999999999" fill="none" stroke="#8c8c8c" stroke-width="0.9"/><rect x="154.25" y="507.15" width="5.699999999999999" height="5.699999999999999" fill="none" stroke="#8c8c8c" stroke-width="0.9"/><rect x="153.8" y="506.7" width="3.2" height="3.3" fill="#d2d2d2"/><rect x="176.14999999999998" y="503.84999999999997" width="5.699999999999999" height="5.699999999999999" fill="none" stroke="#d2d2d2" stroke-width="0.9"/><rect x="179.54999999999998" y="507.15" width="5.699999999999999" height="5.699999999999999" fill="none" stroke="#d2d2d2" stroke-width="0.9"/><rect x="204.6" y="506.7" width="6.6" height="6.6" fill="#d2d2d2"/><rect x="201.64999999999998" y="503.84999999999997" width="5.699999999999999" height="5.699999999999999" fill="#535353" stroke="#d2d2d2" stroke-width="0.9"/></svg>
<div class="abs" style="left:161px;top:464.3px;width:56px;height:12.3px;background:#5b5b5b;border-radius:1px"></div><div class="t jp" style="left:181.2px;top:466.2px;font-size:9px;color:#767676;--w:16.4px">拡張</div>
<div class="t lbl jp" style="left:71px;top:485px;--w:69.5px">パスファインダー：</div>

<!-- status bar & scrollbars -->
<div class="abs" style="left:30.5px;top:533px;width:33.5px;height:11px;background:#3f3f3f;"></div><div class="abs" style="left:64px;top:533px;width:9.5px;height:11px;background:#4a4a4a;box-shadow:inset 0 0 0 .5px #5c5c5c"></div><div class="t" style="left:33px;top:536.3px;font-size:8.8px;letter-spacing:-0.55px;color:#e0e0e0;--w:26px">55.15%</div><div class="abs" style="left:79px;top:533px;width:33.5px;height:11px;background:#3f3f3f;"></div><div class="abs" style="left:112.4px;top:533px;width:11.4px;height:11px;background:#4a4a4a;box-shadow:inset 0 0 0 .5px #5c5c5c"></div><div class="t" style="left:81px;top:536.3px;font-size:8.8px;color:#e0e0e0;--w:8.5px">0°</div><div class="abs" style="left:152.8px;top:533px;width:25.4px;height:11px;background:#3f3f3f;"></div><div class="abs" style="left:178.2px;top:533px;width:11.4px;height:11px;background:#4a4a4a;box-shadow:inset 0 0 0 .5px #5c5c5c"></div><div class="t" style="left:154.6px;top:536.3px;font-size:8.8px;color:#e0e0e0">1</div><div class="abs" style="left:220px;top:533px;width:137px;height:11px;background:#414141;"></div><svg width="200" height="11" viewBox="28 533 200 11" style="left:28px;top:533px"><g fill="none" stroke="#e4e4e4" stroke-width="1.1"><path d="M66.300,538.400L68.700,540.700L71.100,538.400M115.600,538.400L118.100,540.700L120.600,538.400M181.400,538.400L183.900,540.700L186.400,538.400"/></g><g fill="#6e6e6e"><path d="M130.600,536.600h1v5h-1zM136,536.600v5l-3.600,-2.500zM146,536.600v5l-3.600,-2.500zM197.500,536.600v5l3.600,-2.500zM207.700,536.600v5l3.600,-2.500zM212,536.600h1v5h-1z"/></g></svg>
<div class="t jp" style="left:252px;top:535.6px;font-size:8.5px;color:#d0d0d0;--w:67px">選択ツールを切り換え</div><svg width="20" height="10" viewBox="352 533.5 20 10" style="left:352px;top:533.5px"><path d="M356.600,535.400L361,538.600L356.600,541.800Z" fill="#e0e0e0"/><path d="M371.200,535.800L368.600,538.400L371.200,541" fill="none" stroke="#b4b4b4" stroke-width="1"/></svg>
<div class="abs" style="left:362.5px;top:533px;width:1px;height:11px;background:#555"></div><div class="abs" style="left:596px;top:535px;width:16px;height:7px;background:#5a5a5a;border-radius:3.5px"></div><svg width="6" height="8" viewBox="0 0 6 8" style="left:836.5px;top:534.3px"><path d="M1.2,1L4.2,3.8L1.2,6.6" fill="none" stroke="#b4b4b4" stroke-width="1"/></svg><div class="abs" style="left:844px;top:533px;width:11px;height:10.5px;background:#4b4b4b"></div>
<svg width="8" height="6" viewBox="0 0 8 6" style="left:845.6px;top:42.6px"><path d="M1.3,4.2L4,1.6L6.7,4.2" fill="none" stroke="#a6a6a6" stroke-width="1"/></svg><svg width="8" height="6" viewBox="0 0 8 6" style="left:846px;top:524.5px"><path d="M1,1.4L4,4.4L7,1.4" fill="none" stroke="#b4b4b4" stroke-width="1.1"/></svg><div class="abs" style="left:844.900px;top:277.800px;width:9.600px;height:17px;background:#5d5d5d;border-radius:4.800px"></div>

<div id="taskline" class="abs"></div>
<div id="taskbar" class="abs"></div>
<!-- windows taskbar -->
<svg width="22" height="22" viewBox="13 546 22 22" style="left:13px;top:546px"><defs><clipPath id="sunc"><circle cx="21.5" cy="559.7" r="6.6"/></clipPath></defs><circle cx="21.5" cy="559.7" r="6.6" fill="#f6a51d"/><path d="M14,568L30,552V568Z" fill="#ee7b1d" clip-path="url(#sunc)"/><path d="M15,556L20,553L18,560Z" fill="#fbc02a" clip-path="url(#sunc)"/><circle cx="25.9" cy="553.6" r="5.3" fill="#dc1b25"/></svg><div class="t" style="left:23.9px;top:550px;font-size:7.5px;font-weight:bold;color:#fff">6</div><div class="t" style="left:34.6px;top:550.1px;font-size:8.3px;letter-spacing:-0.45px;color:#3c3c3c;--w:16.4px">33°C</div><div class="t jp" style="left:34.2px;top:561.3px;font-size:8px;color:#666;--w:14.5px">晴れ</div>
<svg width="17" height="18" viewBox="311 551 17 18" style="left:311px;top:551px"><defs><linearGradient id="wl" x1="0" y1="0" x2="1" y2="1"><stop offset="0" stop-color="#55c8ff"/><stop offset="1" stop-color="#0a7bdc"/></linearGradient></defs><path d="M311.7,551.8H319V559.6H311.7ZM320,551.8H327.3V559.6H320ZM311.7,560.6H319V568.4H311.7ZM320,560.6H327.3V568.4H320Z" fill="url(#wl)"/></svg>
<div class="abs" style="left:336.7px;top:549.5px;width:146px;height:21px;border-radius:10.5px;background:linear-gradient(90deg,#f7f0e4 0%,#f8f3e6 35%,#f5f8ea 60%,#eef8ee 100%);box-shadow:0 0 0 .5px rgba(120,120,100,.18)"></div><svg width="10" height="10" viewBox="343 554 10 10" style="left:343.5px;top:554.5px"><circle cx="347.7" cy="558.7" r="3.2" fill="none" stroke="#2e2e2e" stroke-width="1.3"/><path d="M350.1,561.1L352.6,563.6" stroke="#2e2e2e" stroke-width="1.5" stroke-linecap="round"/></svg><div class="t jp" style="left:361.5px;top:555.8px;font-size:9px;color:#6a6a6a;--w:17.6px">検索</div>
<svg width="30" height="18" viewBox="449 551.5 30 18" style="left:449px;top:551.5px"><defs><clipPath id="imc"><path d="M452,553.4C455,551.6 460,552.4 463.5,551.9C468,551.6 473,552 476,553.6C478.4,555.5 477.9,560 477.6,564C477.4,567.5 476,569 472,568.9H454C450.5,568.8 449.5,567 449.6,563.5C449.6,559.5 449.4,555.4 452,553.4Z"/></clipPath></defs><g clip-path="url(#imc)"><rect x="449" y="551" width="30" height="19" fill="#2f62c8"/><circle cx="453" cy="556" r="2.2" fill="#8fb2f0"/><circle cx="474.5" cy="555.5" r="2.4" fill="#7ea4ee"/><rect x="459.5" y="551.5" width="8" height="6" fill="#5fa7ea"/><path d="M457,569V560C457,556.5 460,554.6 463.4,554.6C466.8,554.6 470,556.5 470,560V569Z" fill="#f0a028"/><circle cx="463.5" cy="557.6" r="2.6" fill="#f7d9b0"/><path d="M459,569V563.5H468.4V569Z" fill="#e2402a"/><path d="M451,569V563C451,561 453,560 454.8,560C456.6,560 458,561 458,563V569Z" fill="#e8b070"/><path d="M469.6,569V563C469.600,561 471.4,560 473.2,560C475,560 476.6,561 476.600,563V569Z" fill="#d86a50"/><rect x="449" y="567.2" width="30" height="2" fill="#c23a2a"/></g></svg>
<svg width="18" height="16" viewBox="490 552 18 16" style="left:490px;top:552px"><rect x="491.200" y="556.500" width="12" height="10.500" rx="1.300" fill="#202020"/><rect x="495.200" y="552.800" width="11.800" height="9.700" rx="1.300" fill="#f4f4f4" opacity=".78"/></svg>
<svg width="18" height="18" viewBox="520 551 18 18" style="left:520px;top:551px"><defs><linearGradient id="cp1" x1="0" y1="0" x2="0" y2="1"><stop offset="0" stop-color="#1b86ea"/><stop offset=".3" stop-color="#2a93e0"/><stop offset=".55" stop-color="#38c488"/><stop offset=".8" stop-color="#c8d838"/><stop offset="1" stop-color="#f4cc20"/></linearGradient><linearGradient id="cp2" x1="0" y1="0" x2="0" y2="1"><stop offset="0" stop-color="#b45ab4"/><stop offset=".45" stop-color="#c05aa0"/><stop offset=".62" stop-color="#ee6a48"/><stop offset="1" stop-color="#f0782c"/></linearGradient></defs><path d="M523.200,551.900H531C532.400,551.900 533.200,552.700 533.600,554L534.100,555.700H528.900L527.800,559.200L526.500,563.500H522.200C520.800,563.500 520.100,562.400 520.500,560.900L521.900,554C522.200,552.600 522.600,551.900 523.200,551.900Z" fill="url(#cp1)"/><path d="M531.200,551.900C532.600,551.900 533.300,552.800 533.700,554.100L534.100,555.700H530.500Z" fill="#2a5cd4" opacity=".75"/><path d="M534.400,556.100C536.100,556.100 537,557.400 536.600,559L535,565C534.600,566.400 533.800,567.100 532.600,567.100H526.600C525.300,567.100 524.600,566.300 524.400,565.100L524.200,563.900H527.800L529.500,557.600C529.800,556.500 530.500,556.100 531.500,556.100Z" fill="url(#cp2)"/></svg>
<svg width="18" height="16" viewBox="549 552 18 16" style="left:549px;top:552px"><path d="M549.600,554.400C549.600,553.600 550.200,553 551,553H555.400L557.200,554.800H564.800C565.700,554.800 566.400,555.500 566.400,556.400V565.400C566.400,566.300 565.700,567 564.800,567H551.200C550.300,567 549.600,566.300 549.600,565.400Z" fill="#f3b22a"/><path d="M549.600,557.400H566.400V565.400C566.400,566.300 565.700,567 564.800,567H551.200C550.300,567 549.600,566.300 549.600,565.400Z" fill="#fbcf4a"/><path d="M553,563H562.600V567H553Z" fill="#1f6fd0"/><rect x="554.600" y="564.500" width="6.400" height="1.100" fill="#5aa2ee"/></svg>
<svg width="18" height="18" viewBox="578 551 18 18" style="left:578px;top:551px"><defs><linearGradient id="ed1" x1="0.2" y1="0" x2="0.6" y2="1"><stop offset="0" stop-color="#3aaeea"/><stop offset=".5" stop-color="#1f7ed6"/><stop offset="1" stop-color="#1450b4"/></linearGradient><linearGradient id="ed2" x1="0" y1="0" x2="1" y2="1"><stop offset="0" stop-color="#48c8a0"/><stop offset="1" stop-color="#58b84c"/></linearGradient></defs><path d="M587,552C591.500,552 595,555.400 595,559.400C595,562 593.200,563.600 591,563.600C589.600,563.600 588.600,563 588.300,562.200C590,564.600 593,564.800 594.400,563.800C593,566.400 590.200,567.800 587,567.800C582.600,567.800 579,564.300 579,559.900C579,555.500 582.600,552 587,552Z" fill="url(#ed1)"/><path d="M588.600,553.400C592.400,553.600 595,556.400 595,559.400C595,561.600 593.400,562.800 591.600,562.800C590.200,562.800 589.200,562 589,561C589.600,559.800 589.800,558.600 589.400,557.400C589,555.800 588.400,554.600 588.600,553.400Z" fill="url(#ed2)"/><path d="M589.300,557.200C587.400,556.200 584.600,557.200 584.200,559.800C583.900,562.200 585.800,563.800 587.800,563.700C586.600,562.800 586.200,561.400 586.700,560C587.200,558.700 588.200,557.800 589.300,557.200Z" fill="#f2fafd"/></svg>
<svg width="18" height="18" viewBox="608 551 18 18" style="left:608px;top:551px"><path d="M612.600,555.600V554.300C612.600,553 613.500,552.300 614.700,552.300H618.100C619.300,552.300 620.200,553 620.200,554.300V555.600" fill="none" stroke="#3f9fe4" stroke-width="1.100"/><rect x="608.600" y="555" width="15.600" height="13" rx="2" fill="#1b4892"/><rect x="608.600" y="555" width="15.600" height="2.600" rx="1.300" fill="#215bb0"/><rect x="613.600" y="559.200" width="2.500" height="2.500" fill="#f25022"/><rect x="616.700" y="559.200" width="2.500" height="2.500" fill="#7fba00"/><rect x="613.600" y="562.300" width="2.500" height="2.500" fill="#00a4ef"/><rect x="616.700" y="562.300" width="2.500" height="2.500" fill="#ffb900"/></svg>
<svg width="19" height="17" viewBox="636.500 551.500 19 17" style="left:636.500px;top:551.500px"><path d="M643,555.400L648.400,552.600L653.800,555.600V563.500H643Z" fill="#1c50aa"/><path d="M648.200,558.600L653.800,555.600V563.600H646Z" fill="#2a7ad6"/><path d="M643,559.500L648,562L653.800,559V564H643Z" fill="#2f8be2" opacity=".85"/><rect x="637.600" y="555.200" width="8.600" height="8.600" rx="1.200" fill="#1466c6"/><circle cx="641.900" cy="559.500" r="2.300" fill="none" stroke="#fff" stroke-width="1.200"/><rect x="643.400" y="563.600" width="10.400" height="3.700" rx=".6" fill="#38bcd2"/><path d="M645.200,565.500H646.700M647.700,565.500H649.300M650.300,565.500H652" stroke="#123c5c" stroke-width="1.500"/></svg>
<svg width="18" height="22" viewBox="666 551 18 22" style="left:666px;top:551px"><circle cx="675.200" cy="559.700" r="8" fill="#e8453c"/><path d="M675.200,559.700L668.300,555.700A8,8 0 0,0 674.600,567.680Z" fill="#2da94f"/><path d="M675.200,559.700L674.600,567.680A8,8 0 0,0 682.100,555.700Z" fill="#fbbc05"/><path d="M668.300,555.700A8,8 0 0,1 682.100,555.700H675.200Z" fill="#e8453c"/><circle cx="675.200" cy="559.700" r="3.700" fill="#fff"/><circle cx="675.200" cy="559.700" r="2.900" fill="#3b82f0"/><rect x="673.100" y="570.700" width="4.100" height="1.700" rx=".85" fill="#7c868c"/></svg>
<div class="abs" style="left:691.700px;top:547px;width:25.400px;height:26px;border-radius:3px;background:rgba(255,255,255,.42);box-shadow:0 0 0 .5px rgba(255,255,255,.5)"></div><div class="abs" style="left:697.200px;top:552px;width:14.700px;height:14.400px;border-radius:2.800px;background:#300a00"></div><div class="t" style="left:700px;top:554.600px;font-size:10px;font-weight:bold;color:#ff9a00;--w:8.800px">Ai</div><div class="abs" style="left:698.800px;top:570.500px;width:11.400px;height:2.200px;border-radius:1.100px;background:#0a78d4"></div>
<svg width="112" height="14" viewBox="852 553 112 14" style="left:852px;top:553px"><path d="M854.400,561.400L858,557.900L861.600,561.400" fill="none" stroke="#2b2b2b" stroke-width="1.200"/><path d="M876.600,563.200C874.800,563.200 873.900,562 874.100,560.600C874.300,559.400 875.300,558.800 876.200,558.800C876.600,557.200 878.200,556.300 879.800,556.500C881.300,556.700 882.300,557.600 882.700,558.900C884.200,558.900 885.200,559.900 885.200,561.100C885.200,562.400 884.200,563.200 883,563.200Z" fill="#a4a9ac" stroke="#2b2b2b" stroke-width="0.9"/><path d="M875.400,557L884.400,563.600" stroke="#2b2b2b" stroke-width="1.100"/><path d="M917.300,558.200A7.200,7.200 0 0,1 927.300,558.200M918.900,559.900A4.900,4.900 0 0,1 925.700,559.900M920.500,561.600A2.600,2.600 0 0,1 924.100,561.600" fill="none" stroke="#2b2b2b" stroke-width="1"/><circle cx="922.300" cy="563.200" r=".9" fill="#2b2b2b"/><path d="M932.800,558.400H934.600L937.200,556.200V563.800L934.600,561.600H932.800Z" fill="none" stroke="#2b2b2b" stroke-width=".9"/><path d="M939.200,558.200L942.600,561.800M942.600,558.200L939.200,561.800" stroke="#2b2b2b" stroke-width=".9"/><rect x="949" y="557" width="9.600" height="5.800" rx="1" fill="none" stroke="#2b2b2b" stroke-width=".9"/><rect x="950.200" y="558.200" width="6.400" height="3.400" fill="#2b2b2b"/><rect x="959" y="558.800" width="1.200" height="2.200" fill="#2b2b2b"/><path d="M951.600,555L950.200,557.600H952L950.800,559.600" fill="none" stroke="#2b2b2b" stroke-width=".9"/></svg>
<svg width="10" height="12" viewBox="896 554 10 12" style="left:896px;top:554px"><path d="M896.900,565L900.950,555.100L905,565M898.300,561.500H903.600" fill="none" stroke="#2f2f2f" stroke-width="1"/></svg><div class="t" style="left:993px;top:550.500px;font-size:8.200px;letter-spacing:-0.55px;color:#2f2f2f;--w:17.600px">14:36</div><div class="t" style="left:970.600px;top:561.400px;font-size:8.200px;letter-spacing:-0.1px;color:#2f2f2f;--w:40px">2025/07/31</div>

<script>
document.querySelectorAll('.t').forEach(function(e){var w=parseFloat(e.style.getPropertyValue('--w'));if(w>0){var r=e.getBoundingClientRect().width;if(r>0){e.style.transformOrigin='0 50%';e.style.transform='scaleX('+(w/r)+')';}}});
</script>
</body>
</html>
